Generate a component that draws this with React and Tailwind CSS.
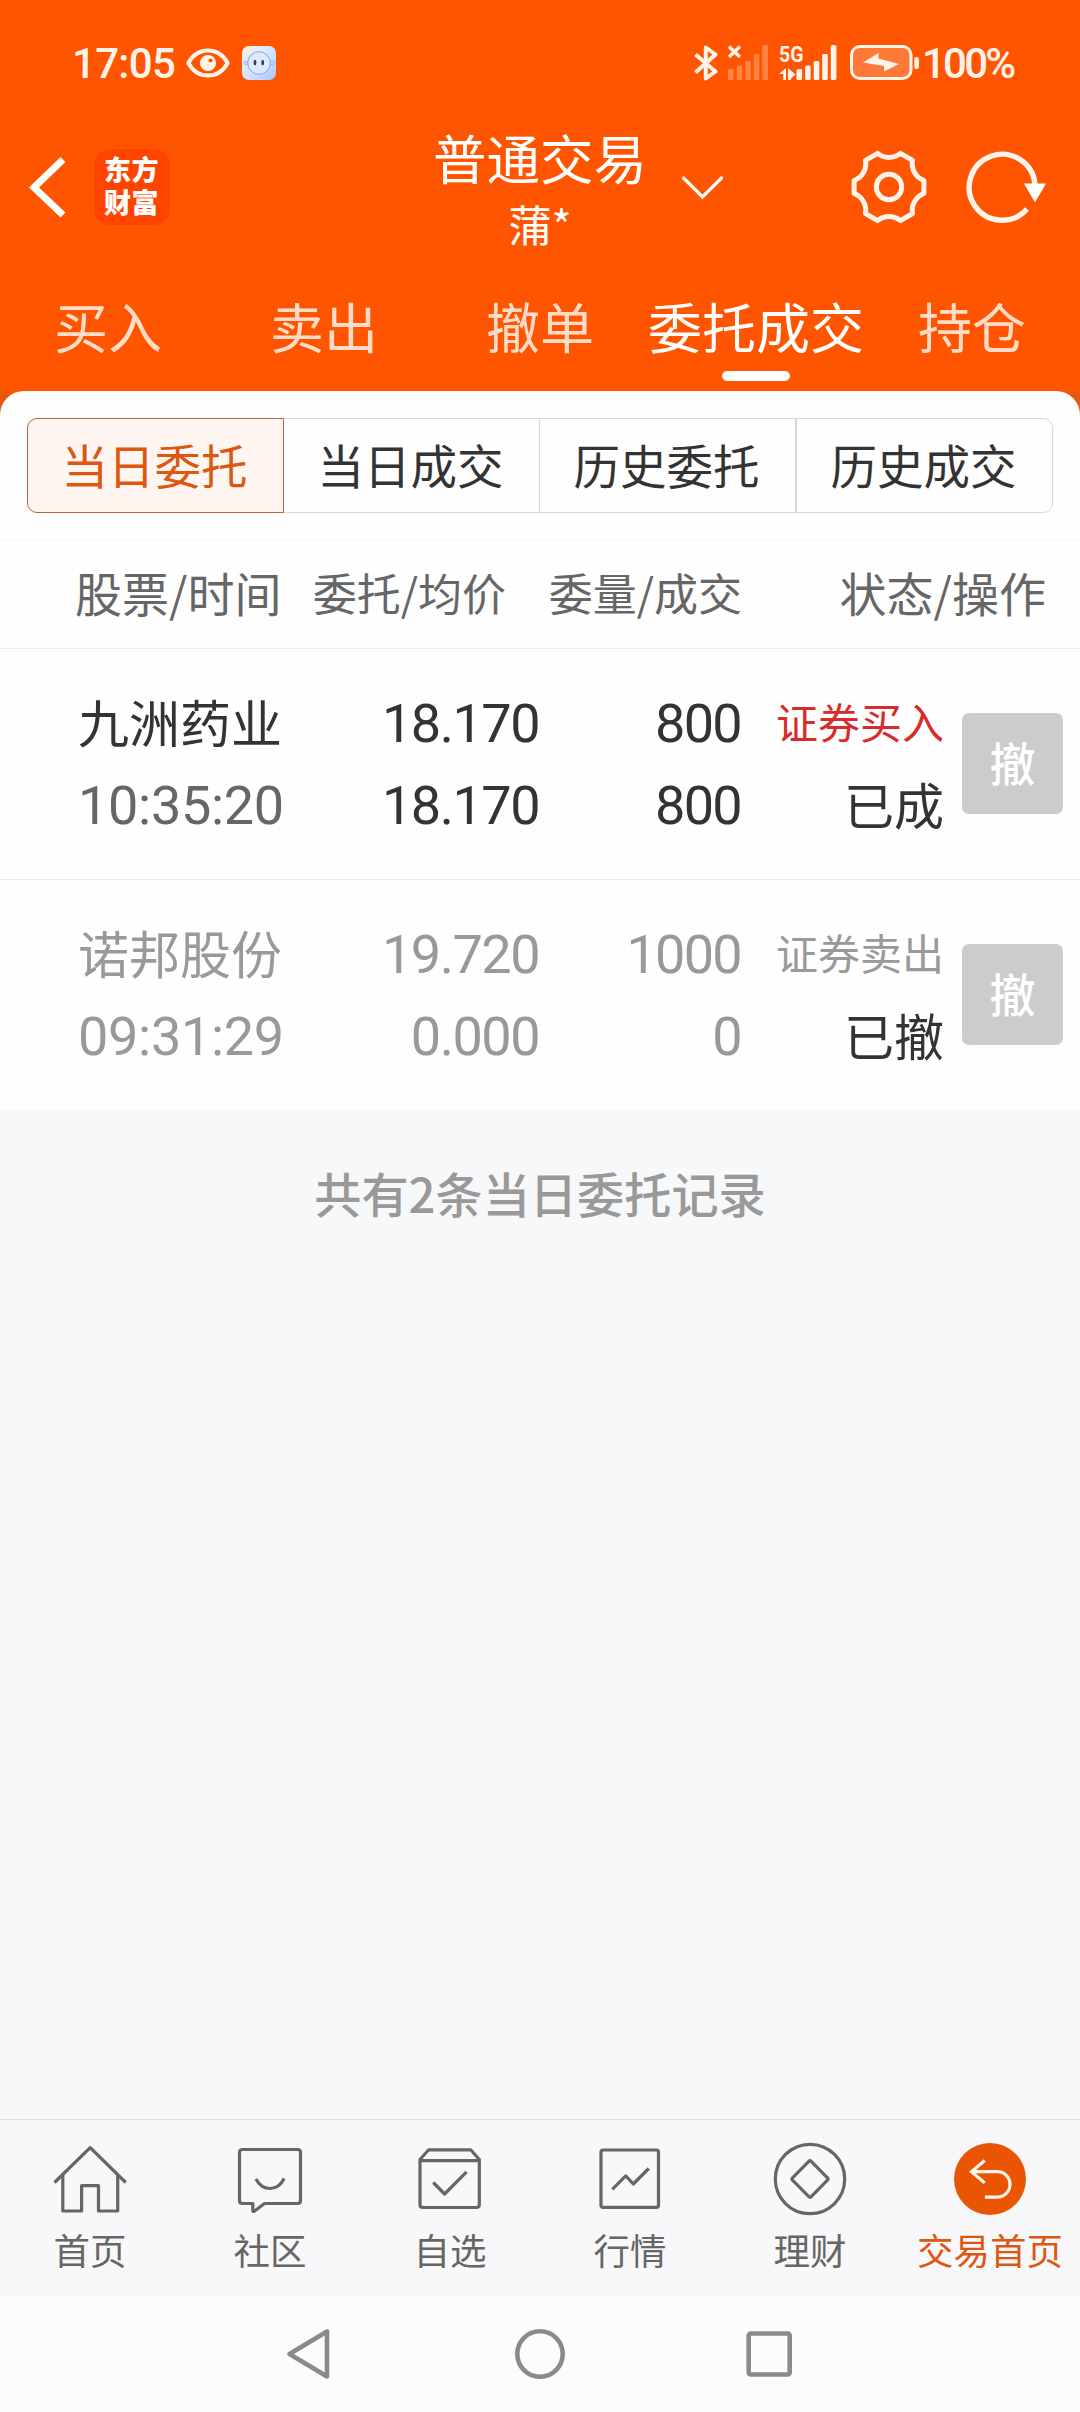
import React from "react";

const NUM = "font-['Roboto','Noto_Sans_CJK_SC',sans-serif]";

const SIGNAL_BARS = [
  [0, 24, 11],
  [8.6, 20.5, 14.5],
  [17.2, 16, 19],
  [25.7, 9, 26],
  [34.3, 0, 35],
];

function SignalBars({ fill }) {
  return SIGNAL_BARS.map(([x, y, h]) => (
    <rect key={x} x={x} y={y} width="5.6" height={h} rx="1.5" fill={fill} />
  ));
}

function StatusBar() {
  return (
    <div className="flex h-[126px] items-center justify-between pl-[72px] pr-[64px] text-[#fff3ea]">
      <div className="flex items-center">
        <span className={`${NUM} w-[114px] pt-[2px] text-[42px] font-medium leading-[50px] tracking-[-0.700px]`}>17:05</span>
        <svg width="44" height="34" viewBox="0 0 44 34" fill="none">
          <path d="M2.300 17C7 8.500 14 4.500 22 4.500S37 8.500 41.700 17C37 25.500 30 29.500 22 29.500S7 25.500 2.300 17Z" stroke="currentColor" strokeWidth="4" strokeLinejoin="round" />
          <circle cx="22" cy="17" r="8" fill="currentColor" />
          <circle cx="24.500" cy="14.500" r="2" fill="#ff5500" />
        </svg>
        <svg className="ml-[12px]" width="34" height="34" viewBox="0 0 34 34">
          <defs>
            <linearGradient id="faceBg" x1="0" y1="0" x2="1" y2="1">
              <stop offset="0" stopColor="#fdf3e4" />
              <stop offset="0.5" stopColor="#d3e6ff" />
              <stop offset="1" stopColor="#a9c5ff" />
            </linearGradient>
          </defs>
          <rect width="34" height="34" rx="7" fill="url(#faceBg)" />
          <circle cx="3.800" cy="17" r="1.800" fill="#cfe0ff" stroke="#86a5ea" strokeWidth="0.8" />
          <circle cx="30.200" cy="17" r="1.800" fill="#cfe0ff" stroke="#86a5ea" strokeWidth="0.8" />
          <circle cx="17" cy="17" r="11.300" fill="#dce9ff" stroke="#86a5ea" strokeWidth="1" />
          <ellipse cx="13" cy="16.500" rx="1.400" ry="2.700" fill="#343c50" />
          <ellipse cx="20.700" cy="16.500" rx="1.400" ry="2.700" fill="#343c50" />
        </svg>
      </div>
      <div className="flex items-center">
        <svg className="mr-[10px]" width="24" height="36" viewBox="0 0 24 36" fill="none" stroke="currentColor" strokeWidth="4" strokeLinejoin="round">
          <path d="M1.500 9.500L21.500 26.500L11.800 33.500V2.500L21.500 9.500L1.500 27.500" />
        </svg>
        <svg className="mr-[11px]" width="40" height="36" viewBox="0 0 40 36">
          <SignalBars fill="#ff8444" />
          <path d="M1 1.500L12 12M12 1.500L1 12" stroke="currentColor" strokeWidth="3.400" />
        </svg>
        <svg className="mr-[13px] overflow-visible" width="58" height="36" viewBox="0 0 58 36" fill="currentColor">
          <text x="0" y="17" fontFamily="Roboto" fontWeight="700" fontSize="22.500" textLength="24.500" lengthAdjust="spacingAndGlyphs">5G</text>
          <path d="M0 29L7 23V35H4.300V29Z" />
          <path d="M9 23L16.500 29.500L12 33.500V35H9Z" />
          <g transform="translate(17.500 0)">
            <SignalBars fill="currentColor" />
          </g>
        </svg>
        <svg className="mr-[2px]" width="70" height="36" viewBox="0 0 70 36">
          <rect x="1.500" y="1.500" width="59.500" height="32" rx="8.500" fill="#ff7936" stroke="currentColor" strokeWidth="3" />
          <path d="M13 17.500L28.500 8V13.500L49 19L34 26.500V21Z" fill="currentColor" />
          <rect x="64.300" y="12" width="4.600" height="12" rx="2" fill="currentColor" />
        </svg>
        <span className={`${NUM} w-[94px] whitespace-nowrap pt-[2px] text-[42px] font-medium leading-[50px] tracking-[-2.800px]`}>100%</span>
      </div>
    </div>
  );
}

function TitleBar() {
  return (
    <div className="grid h-[130px] grid-cols-[340px_400px_340px] items-center text-white">
      <div className="flex items-center pb-[8px] pl-[28px]">
        <svg width="40" height="64" viewBox="0 0 40 64" fill="none" stroke="currentColor" strokeWidth="7">
          <path d="M35 4.500L6 32.500L35 60" />
        </svg>
        <div className="ml-[26px] flex h-[76px] w-[76px] justify-center rounded-[16px] bg-[#ff4400] pt-[3px]">
          <span className="w-[56px] break-all text-[27px] font-black leading-[33px] tracking-[0.5px]">东方财富</span>
        </div>
      </div>
      <div className="flex items-center justify-center pl-[78px]">
        <div className="flex flex-col items-center pt-[2px]">
          <span className="h-[66px] whitespace-nowrap text-[53.500px] leading-[58px]">普通交易</span>
          <span className="h-[62px] text-[43px] leading-[58px]">蒲*</span>
        </div>
        <svg className="mb-[7px] ml-[33px] mr-px shrink-0" width="44" height="28" viewBox="0 0 44 28" fill="none" stroke="currentColor" strokeWidth="3.200">
          <path d="M3.500 4L22.500 23L41.500 4" strokeLinecap="round" />
        </svg>
      </div>
      <div className="flex items-center justify-end gap-[36px] pb-[9px] pr-[31px]">
        <svg width="80" height="80" viewBox="-40 -40 80 80" fill="none" stroke="#fff3ea" strokeWidth="5" strokeLinejoin="round">
          <path d="M11.400 -33.600L23.500 -26.600A18 18 0 0 0 34.900 -6.500V6.500A18 18 0 0 0 23.500 26.600L11.400 33.600A18 18 0 0 0 -11.400 33.600L-23.500 26.600A18 18 0 0 0 -34.900 6.500V-6.500A18 18 0 0 0 -23.500 -26.600L-11.400 -33.600A18 18 0 0 0 11.400 -33.600Z" />
          <circle r="12.700" />
        </svg>
        <svg width="84" height="80" viewBox="-37 -40 84 80" fill="none" stroke="#fff3ea" strokeWidth="5.400">
          <path d="M33 -3A33 33 0 1 0 25 22" />
          <path d="M22 -3.500H44L33 15.500Z" fill="#fff" stroke="none" />
        </svg>
      </div>
    </div>
  );
}

const TABS = ["买入", "卖出", "撤单", "委托成交", "持仓"];

function Tabs() {
  return (
    <div className="grid h-[135px] grid-cols-5 pt-[42px]">
      {TABS.map((tab) => {
        const active = tab === "委托成交";
        return (
          <div key={tab} className="flex flex-col items-center">
            <span className={`h-[73px] text-[54px] leading-[56px] whitespace-nowrap ${active ? "text-white" : "text-[#ffdcc8]"}`}>{tab}</span>
            {active && <span className="h-[10px] w-[68px] rounded-full bg-white" />}
          </div>
        );
      })}
    </div>
  );
}

const SEGMENTS = ["当日委托", "当日成交", "历史委托", "历史成交"];

function Segments() {
  return (
    <div className="flex h-[149px] border-b border-[#f6f6f6] px-[27px] pb-[26px] pt-[27px]">
      {SEGMENTS.map((label, i) => (
        <div
          key={label}
          className={`flex flex-1 items-center justify-center border pb-[3px] pr-[2px] text-[46.500px] leading-[60px] ${
            i === 0
              ? "rounded-l-[10px] border-[#b9633a] bg-[#fff6f2] text-[#dd5710]"
              : i === 3
                ? "rounded-r-[10px] border-[#d6d8d9] text-[#333]"
                : "border-l-0 border-[#d6d8d9] text-[#333]"
          }`}
        >
          {label}
        </div>
      ))}
    </div>
  );
}

function TableHead() {
  return (
    <div className="flex h-[109px] items-center border-b border-[#ececec] pb-[5px] pl-[75px] pr-[34px] leading-[60px] text-[#666]">
      <span className="w-[210px] text-[47px] whitespace-nowrap">股票/时间</span>
      <span className="w-[221px] text-right text-[44px]">委托/均价</span>
      <span className="w-[236px] text-right text-[44px]">委量/成交</span>
      <span className="flex-1 text-right text-[47px]">状态/操作</span>
    </div>
  );
}

const ORDERS = [
  {
    name: "九洲药业", time: "10:35:20", price: "18.170", avg: "18.170", qty: "800", filled: "800",
    side: "证券买入", state: "已成", main: "text-[#333]", sub: "text-[#666]", sideColor: "text-[#d92b2b]", last: false,
  },
  {
    name: "诺邦股份", time: "09:31:29", price: "19.720", avg: "0.000", qty: "1000", filled: "0",
    side: "证券卖出", state: "已撤", main: "text-[#999]", sub: "text-[#999]", sideColor: "text-[#999]", last: true,
  },
];

function OrderRow({ order }) {
  return (
    <div className={`flex items-center pl-[78px] pr-[17px] leading-[84px] ${order.main} ${order.last ? "h-[230px]" : "h-[231px] border-b border-[#ebebeb]"}`}>
      <div className="flex w-[212px] flex-col">
        <span className="h-[82px] text-[51px] leading-[78px] whitespace-nowrap">{order.name}</span>
        <span className={`${NUM} h-[82px] text-[54px] tracking-[-0.300px] whitespace-nowrap ${order.sub}`}>{order.time}</span>
      </div>
      <div className={`${NUM} flex w-[249px] flex-col text-right text-[54px] tracking-[-1.500px]`}>
        <span className="h-[82px]">{order.price}</span>
        <span className="h-[82px]">{order.avg}</span>
      </div>
      <div className={`${NUM} flex w-[202px] flex-col text-right text-[54px] tracking-[-1.700px]`}>
        <span className="h-[82px]">{order.qty}</span>
        <span className="h-[82px]">{order.filled}</span>
      </div>
      <div className="flex w-[203px] flex-col text-right">
        <span className={`h-[82px] text-[42px] leading-[78px] ${order.sideColor}`}>{order.side}</span>
        <span className="h-[82px] text-[50px] leading-[78px] text-[#333]">{order.state}</span>
      </div>
      <button className="mb-[2px] ml-auto h-[101px] w-[101px] rounded-[7px] bg-[#ccc] pb-[4px] text-center text-[46px] font-medium leading-[97px] text-white">撤</button>
    </div>
  );
}

const NAV = [
  {
    label: "首页",
    icon: (
      <>
        <path d="M4.500 43.500L40.200 8.700L75.700 43.500" />
        <path d="M12.800 36V72H31.600V46.700H48.500V72H67.700V36" />
      </>
    ),
  },
  {
    label: "社区",
    icon: (
      <>
        <path d="M12.500 10.500H67.500Q70.500 10.500 70.500 13.500V61.500Q70.500 64.500 67.500 64.500H34.500L24 72.500Q22.800 72.500 22.800 71.500V64.500H12.500Q9.500 64.500 9.500 61.500V13.500Q9.500 10.500 12.500 10.500Z" />
        <path d="M25.900 40Q31 49.500 40 49.500T54.200 39.500" />
      </>
    ),
  },
  {
    label: "自选",
    icon: (
      <>
        <path d="M10 20.500L18.700 10.800H60.700L69.300 20.500V65.500Q69.300 68.500 66.300 68.500H13Q10 68.500 10 65.500Z" />
        <path d="M10 21.700H69.300" />
        <path d="M23.200 43.500L34.600 55L56.600 32.800" />
      </>
    ),
  },
  {
    label: "行情",
    icon: (
      <>
        <rect x="11" y="11" width="57.500" height="57.300" rx="2" />
        <path d="M22.300 50.300L35.700 36.900L43.300 45L58.800 29.500" />
      </>
    ),
  },
  {
    label: "理财",
    icon: (
      <>
        <circle cx="40" cy="40" r="34.700" />
        <path d="M38.800 22.300Q40 21.100 41.200 22.300L57.500 38.800Q58.600 40 57.500 41.200L41.200 57.700Q40 58.900 38.800 57.700L22.500 41.200Q21.400 40 22.500 38.800Z" />
      </>
    ),
  },
  {
    label: "交易首页",
    active: true,
    icon: (
      <>
        <circle cx="40" cy="40" r="36" fill="#ea5504" stroke="none" />
        <path d="M34.700 21.500L21.500 32.700L34.700 43.900M21.500 32.700H47.300A12.700 12.700 0 0 1 47.300 58.100H34.900" stroke="#fff3ea" strokeLinejoin="miter" />
      </>
    ),
  },
];

function BottomNav() {
  return (
    <div className="grid h-[177px] grid-cols-6 border-t border-[#dfe1e4] bg-[#f8f8fa] pt-[19px]">
      {NAV.map((item) => (
        <div key={item.label} className="flex flex-col items-center">
          <svg width="80" height="80" viewBox="0 0 80 80" fill="none" stroke="#666" strokeWidth="3.200" strokeLinejoin="round">
            {item.icon}
          </svg>
          <span className={`mt-[9px] text-[36.500px] leading-[44px] whitespace-nowrap ${item.active ? "text-[#dd5710]" : "text-[#666]"}`}>{item.label}</span>
        </div>
      ))}
    </div>
  );
}

function SystemNav() {
  return (
    <div className="flex h-[116px] items-center justify-center gap-[179px] bg-[#fcfcfc]">
      <svg width="50" height="52" viewBox="0 0 50 52" fill="none" stroke="#8a8a8a" strokeWidth="4.600" strokeLinejoin="round">
        <path d="M4.500 26L42 3.500V48.500Z" />
      </svg>
      <svg width="52" height="52" viewBox="0 0 52 52" fill="none" stroke="#8a8a8a" strokeWidth="4.600">
        <circle cx="26" cy="26" r="22.700" />
      </svg>
      <svg width="50" height="52" viewBox="0 0 50 52" fill="none" stroke="#8a8a8a" strokeWidth="4.600">
        <rect x="3.700" y="5.500" width="41" height="41" rx="2" />
      </svg>
    </div>
  );
}

export default function App() {
  return (
    <div className="flex h-[2412px] w-[1080px] flex-col overflow-hidden bg-[#f7f8fa] font-['Noto_Sans_CJK_SC',sans-serif]">
      <header className="h-[391px] bg-[#ff5500]">
        <StatusBar />
        <TitleBar />
        <Tabs />
      </header>
      <div className="bg-[#e85808]">
        <div className="rounded-t-[24px] bg-[#fefefe]">
          <Segments />
          <TableHead />
          {ORDERS.map((order) => (
            <OrderRow key={order.name} order={order} />
          ))}
        </div>
      </div>
      <p className="flex-1 pt-[51px] text-center text-[47.200px] font-medium leading-[64px] text-[#999]">共有2条当日委托记录</p>
      <BottomNav />
      <SystemNav />
    </div>
  );
}
